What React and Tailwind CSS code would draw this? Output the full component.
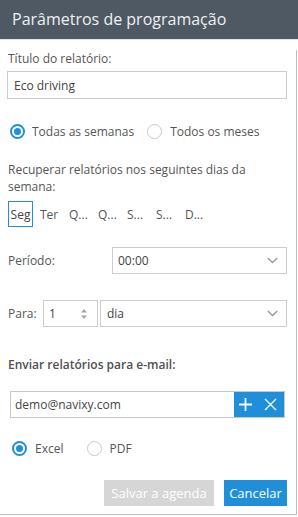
import React from "react";

const font = { fontFamily: '"Open Sans", "DejaVu Sans", sans-serif' };

function Radio({ checked }) {
  return checked ? (
    <span className="flex h-[15px] w-[15px] shrink-0 items-center justify-center rounded-full border-2 border-[#1e8fd8] bg-white">
      <span className="block h-[7px] w-[7px] rounded-full bg-[#1e8fd8]" />
    </span>
  ) : (
    <span className="block h-[15px] w-[15px] shrink-0 rounded-full border border-[#c9c9c9] bg-white" />
  );
}

function Chevron() {
  return (
    <svg width="11" height="7" viewBox="0 0 11 7" className="shrink-0">
      <path d="M0.8 1 L5.5 5.6 L10.2 1" fill="none" stroke="#9a9a9a" strokeWidth="1.4" />
    </svg>
  );
}

export default function App() {
  const days = ["Seg", "Ter", "Q...", "Q...", "S...", "S...", "D..."];
  return (
    <div className="h-[517px] w-[298px] bg-white text-[12px] leading-[17px] text-[#555]" style={font}>
      <div className="flex h-[40px] items-center border-b border-[#e3e5e8] bg-[#4f5963] pl-[12px] text-[16px] text-[#eef0f2]">
        Parâmetros de programação
      </div>
      <div className="w-[297px] border-r border-b border-[#bdbdc6] pl-[7px] pr-[9px] pb-[8px]">
        <div className="mt-[10px] pl-[1px]">Título do relatório:</div>
        <div className="mt-[4px] flex h-[28px] items-center border border-[#cccccc] pl-[6px] text-[#444]">
          Eco driving
        </div>

        <div className="mt-[24px] flex h-[17px] items-center">
          <span className="ml-[3px]"><Radio checked /></span>
          <span className="ml-[7px] text-[#555]">Todas as semanas</span>
          <span className="ml-[13px]"><Radio /></span>
          <span className="ml-[8px] text-[#555]">Todos os meses</span>
        </div>

        <div className="mt-[21px] pl-[1px]">
          Recuperar relatórios nos seguintes dias da semana:
        </div>

        <div className="mt-[6px] flex h-[26px] items-center pl-[1px]">
          {days.map((d, i) => (
            <div
              key={i}
              className={
                i === 0
                  ? "flex h-[26px] w-[25px] items-center justify-center border border-[#1e8fd8] text-[#444]"
                  : "ml-[4px] flex h-[26px] w-[25px] items-center pl-[3px] text-[#555]"
              }
            >
              {d}
            </div>
          ))}
        </div>

        <div className="mt-[20px] flex h-[27px] items-center">
          <span className="pl-[1px]">Período:</span>
          <div className="ml-auto flex h-[27px] w-[175px] items-center justify-between border border-[#cccccc] pl-[5px] pr-[8px] text-[#444]">
            <span>00:00</span>
            <Chevron />
          </div>
        </div>

        <div className="mt-[26px] flex h-[27px] items-center">
          <span className="w-[36px] pl-[1px]">Para:</span>
          <div className="flex h-[27px] w-[55px] items-center justify-between border border-[#cccccc] pl-[5px] pr-[9px] text-[#444]">
            <span>1</span>
            <svg width="8" height="12" viewBox="0 0 8 12">
              <path d="M4 1 L7 4.5 L1 4.5 Z" fill="#a6a6a6" />
              <path d="M1 7.5 L7 7.5 L4 11 Z" fill="#a6a6a6" />
            </svg>
          </div>
          <div className="ml-[2px] flex h-[27px] flex-1 items-center justify-between border border-[#cccccc] pl-[6px] pr-[8px] text-[#444]">
            <span>dia</span>
            <Chevron />
          </div>
        </div>

        <div className="mt-[29px] pl-[1px] font-semibold text-[#505050]">
          Enviar relatórios para e-mail:
        </div>

        <div className="ml-[3px] mt-[18px] flex h-[27px] w-[275px] items-stretch border border-[#c6c6c6]">
          <div className="flex flex-1 items-center pl-[4px] text-[#444]">demo@navixy.com</div>
          <div className="flex w-[50px] items-center bg-[#1e8fd8]">
            <svg width="15" height="15" viewBox="0 0 15 15" className="ml-[4px]">
              <path d="M7.5 1 V14 M1 7.5 H14" stroke="#f4f8fc" strokeWidth="1.8" fill="none" />
            </svg>
            <svg width="13" height="13" viewBox="0 0 13 13" className="ml-[11px]">
              <path d="M1 1 L12 12 M12 1 L1 12" stroke="#eef4fa" strokeWidth="1.4" fill="none" />
            </svg>
          </div>
        </div>

        <div className="mt-[22px] flex h-[17px] items-center">
          <span className="ml-[5px]"><Radio checked /></span>
          <span className="ml-[8px]">Excel</span>
          <span className="ml-[24px]"><Radio /></span>
          <span className="ml-[7px]">PDF</span>
        </div>

        <div className="mt-[23px] flex justify-end gap-[10px] text-[13px]">
          <div className="flex h-[26px] w-[110px] items-center justify-center bg-[#d6d6d6] text-white">
            Salvar a agenda
          </div>
          <div className="flex h-[26px] w-[63px] items-center justify-center bg-[#1e8fd8] text-white">
            Cancelar
          </div>
        </div>
      </div>
    </div>
  );
}
